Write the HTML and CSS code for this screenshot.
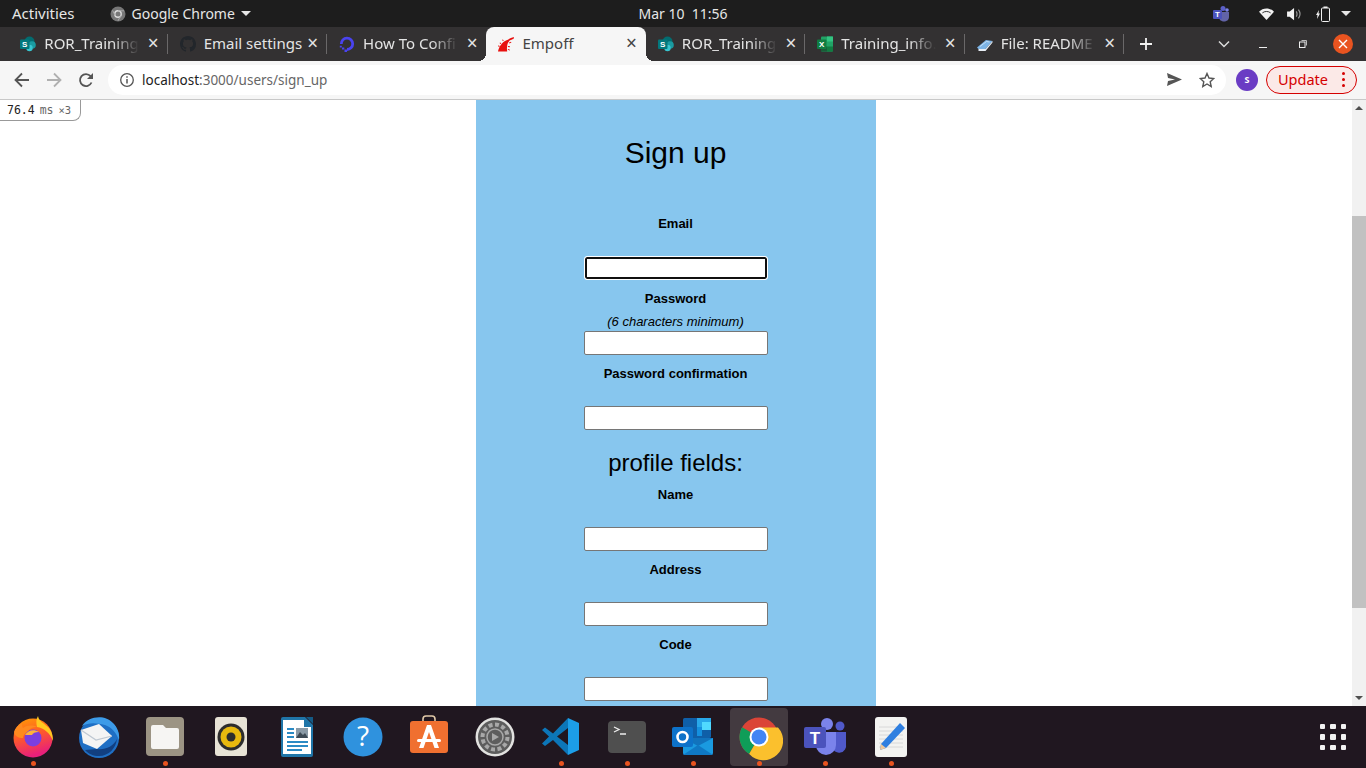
FILE: index.html
```html
<!DOCTYPE html>
<html lang="en">
<head>
    <meta charset="UTF-8">
    <meta name="viewport" content="width=device-width, initial-scale=1.0">
    <title>Empoff</title>
    <link rel="stylesheet" href="styles.css">
</head>
<body>

<!-- gnome top bar -->
<div class="topbar">
    <div class="topbar-left">
        <span class="activities">Activities</span>
        <span class="app-menu">
            <svg class="app-icon" width="16" height="16" viewBox="0 0 16 16"><circle cx="8" cy="8" r="7.5" fill="#777"/><circle cx="8" cy="8" r="3.2" fill="none" stroke="#ddd" stroke-width="1.4"/><path d="M8 4.8h6M5.2 9.6 2.6 4.4M10.8 9.6 8 14.8" stroke="#aaa" stroke-width="1"/></svg>
            Google Chrome
            <span class="caret"></span>
        </span>
    </div>
    <div class="clock">Mar 10&nbsp; 11:56</div>
    <div class="tray">
        <svg width="18" height="18" viewBox="0 0 18 18"><circle cx="11" cy="3.5" r="2.5" fill="#5b5fc7"/><circle cx="15" cy="5" r="1.8" fill="#7b83eb"/><path d="M7 7h10v5c0 6-10 6-10 0z" fill="#6264a7"/><rect x="1" y="5" width="9" height="9" rx="1" fill="#4b53bc"/><text x="5.5" y="12" class="tray-t">T</text></svg>
        <svg class="tray-wifi" width="15" height="12" viewBox="0 0 20 16"><path d="M0 5C5-1 15-1 20 5L10 16z" fill="#f2f2f2"/><path d="M4.500 6.500c3-2.500 8-2.500 11 0" fill="none" stroke="#1d1d1d" stroke-width="1.200"/></svg>
        <svg class="tray-vol" width="15" height="14" viewBox="0 0 17 16"><path d="M0 5h3l5-4v14l-5-4H0z" fill="#f2f2f2"/><path d="M10.500 5c1.200 2 1.200 4 0 6M13 3c2.200 3 2.200 7 0 10" fill="none" stroke="#999" stroke-width="1.300"/></svg>
        <svg class="tray-bat" width="14" height="16" viewBox="0 0 14 16"><path d="M3 4 0 9h1.500l-.5 4 3-5.500H2.500L3 4z" fill="#f2f2f2"/><rect x="5.500" y="2" width="8" height="13.500" rx="1" fill="none" stroke="#f2f2f2" stroke-width="1"/><rect x="7.500" y="0.500" width="4" height="1.500" fill="#f2f2f2"/></svg>
        <span class="caret"></span>
    </div>
</div>

<!-- chrome tab strip -->
<div class="tabstrip">
    <div class="tab">
        <svg class="favicon" viewBox="0 0 16 16"><circle cx="9.500" cy="5.500" r="5" fill="#036c70"/><circle cx="12" cy="9" r="3.800" fill="#1a9ba1"/><circle cx="9.500" cy="12" r="3.200" fill="#37c6d0"/><rect x="0" y="3.500" width="9.500" height="9.500" rx="1" fill="#03787c"/><text x="4.750" y="11" class="fav-t">S</text></svg>
        <span class="tab-title">ROR_Training</span>
        <span class="tab-close">×</span>
    </div>
    <div class="tab">
        <svg class="favicon" viewBox="0 0 16 16"><path fill="#22262b" d="M8 0C3.580 0 0 3.580 0 8c0 3.540 2.290 6.530 5.470 7.590.4.07.55-.17.55-.38 0-.19-.01-.82-.01-1.490-2.010.37-2.530-.49-2.690-.94-.09-.23-.48-.94-.82-1.130-.28-.15-.68-.52-.01-.53.63-.01 1.080.58 1.230.82.72 1.210 1.870.87 2.330.66.07-.52.28-.87.51-1.070-1.780-.2-3.640-.89-3.640-3.950 0-.87.31-1.590.82-2.150-.08-.2-.36-1.020.08-2.120 0 0 .67-.21 2.200.82.64-.18 1.320-.27 2-.27.68 0 1.360.09 2 .27 1.530-1.040 2.200-.82 2.200-.82.44 1.100.16 1.920.08 2.120.51.56.82 1.270.82 2.150 0 3.070-1.870 3.750-3.650 3.950.29.25.54.73.54 1.480 0 1.070-.01 1.930-.01 2.200 0 .21.15.46.55.38A8.013 8.013 0 0016 8c0-4.420-3.580-8-8-8z"/></svg>
        <span class="tab-title tab-title-full">Email settings</span>
        <span class="tab-close">×</span>
    </div>
    <div class="tab tab-nosep">
        <svg class="favicon" viewBox="0 0 16 16"><path d="M8 13.500A5.700 5.700 0 1 0 2.300 8" fill="none" stroke="#4a43f0" stroke-width="2.800"/><path d="M5.500 13.500h2.500V16H5.500zM3 11.500h2.300v2H3zM.8 9.800h2v1.800h-2z" fill="#4a43f0"/></svg>
        <span class="tab-title">How To Confi</span>
        <span class="tab-close">×</span>
    </div>
    <div class="tab tab-active">
        <svg class="favicon" viewBox="0 0 16 16"><path d="M0 15.500C1 10.500 4 6.500 8 4.500 10 3.500 13 1.500 16 1l-.5 2C12 3.500 10.500 5.500 9.500 8 8.800 10.500 8.800 13 9.200 15.500z" fill="#e8100e"/><path d="M11 6.500l2-.8.4.9-2 .8zM12 3.500l1.200-.8.5.8-1.200.8zM1 11 0 10l.8-.8 1 1zM2.500 8l-1-1 .8-.6 1 1zM5 5l-1-1 .8-.5 1 1zM10 10l2 .3-.2 1-2-.3zM10 13l2 .8-.3.8-2-.8z" fill="#e8100e"/></svg>
        <span class="tab-title tab-title-full">Empoff</span>
        <span class="tab-close">×</span>
    </div>
    <div class="tab">
        <svg class="favicon" viewBox="0 0 16 16"><circle cx="9.500" cy="5.500" r="5" fill="#036c70"/><circle cx="12" cy="9" r="3.800" fill="#1a9ba1"/><circle cx="9.500" cy="12" r="3.200" fill="#37c6d0"/><rect x="0" y="3.500" width="9.500" height="9.500" rx="1" fill="#03787c"/><text x="4.750" y="11" class="fav-t">S</text></svg>
        <span class="tab-title">ROR_Training</span>
        <span class="tab-close">×</span>
    </div>
    <div class="tab">
        <svg class="favicon" viewBox="0 0 16 16"><rect x="4" y="0.500" width="12" height="15" rx="1" fill="#21a366"/><rect x="10" y="0.500" width="6" height="5" fill="#33c481"/><rect x="10" y="10.500" width="6" height="5" fill="#107c41"/><rect x="4" y="10.500" width="6" height="5" fill="#185c37"/><rect x="0" y="3.500" width="9.500" height="9.500" rx="1" fill="#107c41"/><text x="4.750" y="11" class="fav-t">X</text></svg>
        <span class="tab-title">Training_info.</span>
        <span class="tab-close">×</span>
    </div>
    <div class="tab">
        <svg class="favicon" viewBox="0 0 16 16"><path d="M0 11.500 9 4l6.500 1-7 8L1.500 13z" fill="#7db4e6"/><path d="M1.500 13l7 0 7-8v1.500L8.500 15h-7z" fill="#e8eef5"/><path d="M3 10.500 9.500 5.500l3 .5" fill="none" stroke="#c8e0f5" stroke-width="1"/></svg>
        <span class="tab-title">File: README</span>
        <span class="tab-close">×</span>
    </div>
    <span class="new-tab">
        <svg width="14" height="14" viewBox="0 0 14 14"><path d="M7 1v12M1 7h12" stroke="#f2f2f2" stroke-width="1.800"/></svg>
    </span>
    <div class="win-buttons">
        <svg class="win-chevron" width="12" height="8" viewBox="0 0 12 8"><path d="M1 1.500 6 6.500l5-5" fill="none" stroke="#dcdcdc" stroke-width="1.500"/></svg>
        <svg class="win-min" width="8" height="8" viewBox="0 0 8 8"><path d="M0 7.500h8" stroke="#eee" stroke-width="1"/></svg>
        <svg class="win-restore" width="8" height="8" viewBox="0 0 8 8"><rect x="0.500" y="2" width="5.500" height="5.500" fill="none" stroke="#eee"/><path d="M2.500 .5h5v5" fill="none" stroke="#bbb"/></svg>
        <span class="win-close">
            <svg width="10" height="10" viewBox="0 0 10 10"><path d="M1 1l8 8M9 1l-8 8" stroke="#fff" stroke-width="1.400"/></svg>
        </span>
    </div>
</div>

<!-- chrome toolbar -->
<div class="toolbar">
    <svg class="nav-btn" width="16" height="16" viewBox="0 0 16 16"><path d="M15 8H2M8 1.500 1.500 8 8 14.500" fill="none" stroke="#555" stroke-width="1.800"/></svg>
    <svg class="nav-btn nav-fwd" width="16" height="16" viewBox="0 0 16 16"><path d="M1 8h13M8 1.500 14.500 8 8 14.500" fill="none" stroke="#b0b0b0" stroke-width="1.800"/></svg>
    <svg class="nav-btn nav-reload" width="16" height="16" viewBox="0 0 16 16"><path d="M13.500 10.500A6 6 0 1 1 12.600 4.200" fill="none" stroke="#555" stroke-width="1.800"/><path d="M15 1v6H9z" fill="#555"/></svg>
    <div class="omnibox">
        <svg width="16" height="16" viewBox="0 0 16 16"><circle cx="8" cy="8" r="6.300" fill="none" stroke="#555" stroke-width="1.300"/><path d="M8 7v4.500M8 4.300v1.500" stroke="#555" stroke-width="1.500"/></svg>
        <span class="url"><b>localhost</b>:3000/users/sign_up</span>
        <svg class="omni-send" width="15" height="13" viewBox="0 0 15 13"><path d="M0 0l15 6.500L0 13l1-5 7-1.500L1 5z" fill="#555"/></svg>
        <svg class="omni-star" width="16" height="16" viewBox="0 0 16 16"><path d="M8 1.500l2 4.500 4.800.5-3.600 3.200 1 4.800L8 12l-4.200 2.500 1-4.800L1.200 6.500 6 6z" fill="none" stroke="#555" stroke-width="1.400"/></svg>
    </div>
    <span class="avatar">S</span>
    <span class="update-pill"><span class="update-label">Update</span> <i class="dots"><i></i><i></i><i></i></i></span>
</div>

<!-- page content -->
<div class="page">
    <div class="viewport">
        <div class="mini-profiler"><b>76.4</b> <span>ms</span> <small>×3</small></div>
        <div class="signup-panel">
            <h1>Sign up</h1>
            <form>
                <div class="field">
                    <label>Email</label>
                    <div class="hint"></div>
                    <input type="text" class="is-focused">
                </div>
                <div class="field">
                    <label>Password</label>
                    <div class="hint"><em>(6 characters minimum)</em></div>
                    <input type="password">
                </div>
                <div class="field">
                    <label>Password confirmation</label>
                    <div class="hint"></div>
                    <input type="password">
                </div>
                <h2>profile fields:</h2>
                <div class="field">
                    <label>Name</label>
                    <div class="hint"></div>
                    <input type="text">
                </div>
                <div class="field">
                    <label>Address</label>
                    <div class="hint"></div>
                    <input type="text">
                </div>
                <div class="field">
                    <label>Code</label>
                    <div class="hint"></div>
                    <input type="text">
                </div>
            </form>
        </div>
    </div>
    <div class="scrollbar">
        <span class="scroll-btn"><i class="arrow-up"></i></span>
        <div class="scroll-track"><div class="scroll-thumb"></div></div>
        <span class="scroll-btn"><i class="arrow-down"></i></span>
    </div>
</div>

<!-- ubuntu dock -->
<div class="dock">
    <div class="dock-item running">
        <svg viewBox="0 0 48 48"><defs><linearGradient id="ff" x1="0" y1="0" x2="0.300" y2="1"><stop offset="0" stop-color="#ffa000"/><stop offset=".5" stop-color="#ff5a2a"/><stop offset="1" stop-color="#e8207a"/></linearGradient></defs><circle cx="24" cy="25" r="19.500" fill="url(#ff)"/><path d="M29 3c1 6 6 7 10 11 4 4 5 9 5 14-3-8-9-13-16-14-1-4-1-8 1-11z" fill="#ffc81f"/><path d="M5 19c1-4 4-7 8-9 0 2 0 4 1 5 4-3 10-3 14-1-5 0-8 2-9 5-3 1-5 3-5 6-5 0-8-2-9-6z" fill="#ff8a1f"/><circle cx="24" cy="25" r="8.500" fill="#7a3fe0"/><path d="M16 22c3-5 9-6 14-3-4 0-6 1-7 3z" fill="#ffb33a"/></svg>
    </div>
    <div class="dock-item">
        <svg viewBox="0 0 48 48"><circle cx="24" cy="25" r="20" fill="#1f6fc4"/><path d="M7 13C13 3 30 1 38 10c4 4 7 10 6 17-3-8-8-13-14-15-8-2-16-3-23 1z" fill="#3d9be8"/><path d="M6 17l18-6 13 12-15 13-14-6z" fill="#f4f4f4"/><path d="M6 17l15 10 16-4" fill="none" stroke="#bfc8d2" stroke-width="1.200"/><path d="M22 36c8 1 16-2 20-10-1 9-8 17-18 17-6 0-10-2-14-6z" fill="#123f80"/></svg>
    </div>
    <div class="dock-item running">
        <svg viewBox="0 0 48 48"><rect x="5" y="4" width="38" height="39" rx="4" fill="#9c9484"/><path d="M10 14a2 2 0 0 1 2-2h10l3 3h11a2 2 0 0 1 2 2v17a2 2 0 0 1-2 2H12a2 2 0 0 1-2-2z" fill="#f6f5f3"/></svg>
    </div>
    <div class="dock-item">
        <svg viewBox="0 0 48 48"><rect x="8" y="4" width="32" height="39" rx="3" fill="#e8e3d6"/><circle cx="24" cy="24" r="13.500" fill="#2d2d2d"/><circle cx="24" cy="24" r="10.500" fill="#e8b90e"/><circle cx="24" cy="24" r="4.500" fill="#2d2d2d"/></svg>
    </div>
    <div class="dock-item">
        <svg viewBox="0 0 48 48"><path d="M8 6a2 2 0 0 1 2-2h22l8 8v30a2 2 0 0 1-2 2H10a2 2 0 0 1-2-2z" fill="#1f75a8"/><path d="M10 7h21v7h7v27H10z" fill="#fff"/><path d="M33 4h7v7z" fill="#145a85"/><path d="M14 15h7v2h-7zM14 19h7v2h-7zM14 23h7v2h-7zM14 28h21v2H14zM14 32h21v2H14zM14 36h15v2H14z" fill="#2b8ac4"/><rect x="23" y="15" width="12" height="10" fill="#8a9aa6"/><path d="M23 25l4-6 3 3 2-2 3 5z" fill="#3d4a55"/></svg>
    </div>
    <div class="dock-item">
        <svg viewBox="0 0 48 48"><circle cx="24" cy="24" r="19.500" fill="#2f92de"/><text x="24" y="33" class="dock-q">?</text></svg>
    </div>
    <div class="dock-item">
        <svg viewBox="0 0 48 48"><path d="M18 9V6a3 3 0 0 1 3-3h6a3 3 0 0 1 3 3v3" fill="none" stroke="#e0c9a8" stroke-width="1.600"/><rect x="5" y="8" width="38" height="32" rx="3" fill="#f07030"/><path d="M22 12h4l8 23h-4.500L24 19l-5.500 16H14z" fill="#fff"/><rect x="12" y="26" width="24" height="3" rx="1.500" fill="#fff"/></svg>
    </div>
    <div class="dock-item">
        <svg viewBox="0 0 48 48"><circle cx="24" cy="24" r="19.500" fill="#e2e2e0"/><circle cx="24" cy="24" r="17" fill="#5d5d5d"/><circle cx="24" cy="24" r="12.500" fill="none" stroke="#a8a8a8" stroke-width="4" stroke-dasharray="4 2.500"/><circle cx="24" cy="24" r="8" fill="#5d5d5d" stroke="#a8a8a8" stroke-width="1.500"/><path d="M21 20l7 4-7 4z" fill="#a8a8a8"/></svg>
    </div>
    <div class="dock-item running">
        <svg viewBox="0 0 48 48"><path d="M5 17l3-2.500 8 6L31 5v10L20 23.500l11 8.500v10L16 27l-8 6-3-2.500 7-7z" fill="#0c76b8"/><path d="M31 5l11 5v27l-11 5z" fill="#1c9ee8"/></svg>
    </div>
    <div class="dock-item running">
        <svg viewBox="0 0 48 48"><rect x="5" y="8" width="38" height="32" rx="4" fill="#4f4f4f"/><path d="M11 14l5 2.500-5 2.500" fill="none" stroke="#eee" stroke-width="1.300"/><path d="M17 21h6" stroke="#eee" stroke-width="1.500"/></svg>
    </div>
    <div class="dock-item running">
        <svg viewBox="0 0 48 48"><rect x="14" y="5" width="28" height="20" rx="1.500" fill="#0f5fa8"/><rect x="28" y="5" width="14" height="9" fill="#28a8ea"/><rect x="33" y="9" width="9" height="8" fill="#50d9ff"/><rect x="28" y="14" width="5" height="9" fill="#1490df"/><path d="M14 25h30v15a2 2 0 0 1-2 2H16a2 2 0 0 1-2-2z" fill="#1a9ae0"/><path d="M14 25h30L29 33z" fill="#1173bd"/><path d="M14 42l15-10 15 10z" fill="#0f78c4"/><rect x="3" y="14" width="21" height="20" rx="2" fill="#0d72c9"/><circle cx="13.500" cy="24" r="5" fill="none" stroke="#fff" stroke-width="2.600"/></svg>
    </div>
    <div class="dock-item running dock-hover">
        <svg viewBox="0 0 48 48"><circle cx="24" cy="24" r="19.500" fill="#db4437"/><path d="M24 24 7.100 14.300A19.500 19.500 0 0 0 14.200 40.900z" fill="#0f9d58"/><path d="M24 14.500h19A19.500 19.500 0 0 1 14.200 40.900L24 24z" fill="#fbc02d"/><circle cx="24" cy="24" r="9.500" fill="#fff"/><circle cx="24" cy="24" r="7.500" fill="#4285f4"/></svg>
    </div>
    <div class="dock-item running">
        <svg viewBox="0 0 48 48"><circle cx="26" cy="11" r="6" fill="#7b83eb"/><circle cx="39" cy="13" r="4.500" fill="#5059c9"/><path d="M31 19h14v12a7 7 0 0 1-14 3z" fill="#5059c9"/><path d="M15 19h20v13a10 10 0 0 1-20 0z" fill="#7b83eb"/><rect x="3" y="14" width="22" height="21" rx="2" fill="#4b53bc"/><text x="14" y="31" class="dock-t">T</text></svg>
    </div>
    <div class="dock-item running">
        <svg viewBox="0 0 48 48"><rect x="8" y="4" width="32" height="40" rx="3" fill="#f3f3f1"/><path d="M12 14h24M12 18h24M12 22h24M12 26h24M12 30h24M12 34h24" stroke="#d8d8d8" stroke-width="1"/><path d="M33 10l5 5-19 20-6 2 1-6z" fill="#2f7fe0"/><path d="M14 31l5 4-6 2z" fill="#f0c89a"/></svg>
    </div>
    <div class="apps-grid">
        <i></i><i></i><i></i><i></i><i></i><i></i><i></i><i></i><i></i>
    </div>
</div>

</body>
</html>
```

FILE: styles.css
```css
* {
    box-sizing: border-box;
}

html, body {
    margin: 0;
    height: 100%;
    overflow: hidden;
}

body {
    display: flex;
    flex-direction: column;
    height: 768px;
    font-family: "Noto Sans", "Open Sans", sans-serif;
    background-color: white;
}

/* top bar */
.topbar {
    height: 27px;
    flex: none;
    display: grid;
    grid-template-columns: 1fr auto 1fr;
    align-items: center;
    background-color: #1d1d1d;
    color: #e6e6e6;
    font-size: 14px;
}

.topbar-left {
    display: flex;
    align-items: center;
    padding-left: 12px;
}

.activities {
    margin-top: -2px;
    font-size: 15px;
}

.app-menu {
    display: flex;
    align-items: center;
    margin-left: 35px;
}

.app-icon {
    margin-right: 6px;
}

.caret {
    display: inline-block;
    width: 0;
    height: 0;
    margin-left: 6px;
    border-left: 5px solid transparent;
    border-right: 5px solid transparent;
    border-top: 5px solid #e6e6e6;
}

.clock {
    font-size: 14px;
}

.tray {
    display: flex;
    align-items: center;
    justify-content: flex-end;
    padding-right: 15px;
}

.tray-wifi {
    margin-left: 29px;
}

.tray-vol {
    margin-left: 13px;
}

.tray-bat {
    margin-left: 14px;
}

.tray .caret {
    margin-left: 11px;
}

.tray-t {
    font: bold 8px "Liberation Sans", sans-serif;
    fill: white;
    text-anchor: middle;
}

/* tabs */
.tabstrip {
    height: 34px;
    flex: none;
    display: flex;
    padding-left: 8.3px;
    background-color: #333132;
}

.tab {
    position: relative;
    width: 159.4px;
    flex: none;
    display: flex;
    align-items: center;
    padding-left: 12px;
    color: #e4e4e4;
    font-size: 15px;
}

.tab::after {
    content: "";
    position: absolute;
    right: 0;
    top: 7px;
    height: 20px;
    width: 1px;
    background-color: #6a6869;
}

.tab-nosep::after {
    display: none;
}

.tab-active {
    background-color: #f6f6f6;
    color: #444;
    border-radius: 8px 8px 0 0;
}

/* the two flared corners at the foot of the active tab */
.tab-active::before,
.tab-active::after {
    content: "";
    position: absolute;
    top: auto;
    bottom: 0;
    width: 8px;
    height: 8px;
}

.tab-active::before {
    left: -8px;
    background: radial-gradient(circle at 0 0, transparent 8px, #f6f6f6 8px);
}

.tab-active::after {
    right: -8px;
    background: radial-gradient(circle at 100% 0, transparent 8px, #f6f6f6 8px);
}

.favicon {
    width: 16px;
    height: 16px;
    flex: none;
    margin-right: 8px;
}

.tab-title {
    width: 95px;
    margin-top: -2px;
    overflow: hidden;
    white-space: nowrap;
    -webkit-mask-image: linear-gradient(to right, black 72%, transparent 100%);
    mask-image: linear-gradient(to right, black 72%, transparent 100%);
}

.tab-title-full {
    width: 98px;
    -webkit-mask-image: none;
    mask-image: none;
}

.tab-close {
    position: absolute;
    left: 138px;
    top: 7px;
    width: 14px;
    text-align: center;
    font-size: 19px;
    line-height: 19px;
}

.new-tab {
    display: flex;
    margin-left: 15px;
    align-items: center;
}

.win-buttons {
    display: flex;
    align-items: center;
    margin-left: 65px;
}

.win-min {
    margin-left: 29px;
}

.win-restore {
    margin-left: 32px;
}

.win-close {
    display: flex;
    align-items: center;
    justify-content: center;
    width: 20px;
    height: 20px;
    margin-left: 26px;
    border-radius: 50%;
    background-color: #e95420;
}

/* toolbar */
.toolbar {
    height: 39px;
    flex: none;
    display: flex;
    align-items: center;
    padding: 0 9px 1px 14px;
    background-color: #f6f6f6;
    border-bottom: 1px solid #c8c8c8;
}

.nav-fwd {
    margin-left: 16px;
}

.nav-reload {
    margin-left: 16px;
}

.omnibox {
    width: 1118px;
    height: 30px;
    display: flex;
    align-items: center;
    margin-left: 14px;
    padding: 0 11px 0 11px;
    border-radius: 15px;
    background-color: white;
}

.url {
    margin-left: 7px;
    font-size: 13.5px;
    color: #666;
}

.url b {
    font-weight: normal;
    color: #222;
}

.omni-send {
    margin-left: auto;
}

.omni-star {
    margin-left: 17px;
}

.avatar {
    width: 22px;
    height: 22px;
    flex: none;
    display: flex;
    align-items: center;
    justify-content: center;
    margin-left: 10px;
    border-radius: 50%;
    background-color: #6a3cc4;
    color: white;
    font-size: 9px;
    font-weight: bold;
}

.update-pill {
    width: 91px;
    height: 28px;
    flex: none;
    display: flex;
    align-items: center;
    margin-left: 8px;
    padding-left: 11px;
    border: 1px solid #d50000;
    border-radius: 14px;
    background-color: #fbe9e7;
    color: #d50000;
    font-size: 14.5px;
}

.update-label {
    margin-top: -2px;
}

.dots {
    display: flex;
    flex-direction: column;
    gap: 3px;
    margin-left: auto;
    margin-right: 11px;
}

.dots i {
    width: 3px;
    height: 3px;
    border-radius: 50%;
    background-color: #d50000;
}

/* page */
.page {
    flex: 1;
    min-height: 0;
    display: flex;
}

.viewport {
    position: relative;
    flex: 1;
    overflow: hidden;
    background-color: white;
}

.mini-profiler {
    position: absolute;
    left: 0;
    top: 0;
    width: 81px;
    height: 21px;
    padding: 3px 0 0 7px;
    border: 1px solid #999;
    border-width: 0 1px 1px 0;
    border-radius: 0 0 8px 0;
    background-color: white;
    color: #666;
    font-family: "DejaVu Sans Mono", monospace;
    font-size: 11.5px;
    word-spacing: -2px;
    white-space: nowrap;
}

.mini-profiler b {
    font-weight: normal;
    color: #222;
}

.mini-profiler small {
    font-size: 10.5px;
}

.signup-panel {
    width: 400px;
    margin: 0 auto;
    padding-top: 36px;
    background-color: #87c6ee;
    font-family: "Liberation Sans", Arial, sans-serif;
    text-align: center;
    color: black;
}

.signup-panel h1 {
    margin: 0 0 46px;
    padding-right: 1px;
    font-size: 30px;
    font-weight: normal;
    line-height: 34px;
}

.signup-panel h2 {
    margin: 0 0 6px;
    padding: 3px 1px 0 0;
    font-size: 24px;
    font-weight: normal;
    line-height: 37px;
}

.field {
    height: 75px;
}

.field label {
    display: block;
    padding-right: 1px;
    font-size: 13px;
    font-weight: bold;
    line-height: 15px;
}

.hint {
    height: 25px;
    padding: 8px 1px 0 0;
    font-size: 13px;
    line-height: 15px;
}

.field input {
    display: block;
    width: 184px;
    height: 24px;
    margin: 0 auto;
    padding: 1px 2px;
    border: 1px solid #767676;
    border-radius: 2px;
    background-color: white;
}

.field input.is-focused {
    border-color: white;
    border-radius: 3px;
    box-shadow: inset 0 0 0 2px #101010;
}

/* scrollbar */
.scrollbar {
    width: 14px;
    flex: none;
    display: flex;
    flex-direction: column;
    background-color: #f1f1f1;
}

.scroll-btn {
    height: 16px;
    flex: none;
    display: flex;
    align-items: center;
    justify-content: center;
}

.arrow-up, .arrow-down {
    width: 0;
    height: 0;
    border-left: 4px solid transparent;
    border-right: 4px solid transparent;
}

.arrow-up {
    border-bottom: 4px solid #505050;
}

.arrow-down {
    border-top: 4px solid #505050;
}

.scroll-track {
    flex: 1;
    padding-top: 100px;
}

.scroll-thumb {
    height: 392px;
    background-color: #c1c1c1;
}

/* dock */
.dock {
    height: 62px;
    flex: none;
    display: flex;
    align-items: center;
    background-color: #201720;
}

.dock-item {
    position: relative;
    width: 66px;
    height: 62px;
    flex: none;
    display: flex;
    align-items: center;
    justify-content: center;
}

.dock-item svg {
    width: 48px;
    height: 48px;
}

.running::after {
    content: "";
    position: absolute;
    left: 31px;
    bottom: 2px;
    width: 5px;
    height: 5px;
    border-radius: 50%;
    background-color: #e95420;
}

.dock-hover::before {
    content: "";
    position: absolute;
    left: 4px;
    top: 2px;
    width: 58px;
    height: 58px;
    border-radius: 4px;
    background-color: #433a40;
}

.dock-hover svg {
    position: relative;
}

.dock-q {
    font: 28px "Open Sans", sans-serif;
    fill: white;
    text-anchor: middle;
}

.dock-t {
    font: bold 17px "Liberation Sans", sans-serif;
    fill: white;
    text-anchor: middle;
}

.fav-t {
    font: bold 8px "Liberation Sans", sans-serif;
    fill: white;
    text-anchor: middle;
}

.apps-grid {
    display: grid;
    grid-template-columns: repeat(3, 5.5px);
    gap: 5px;
    margin-left: auto;
    margin-right: 20px;
}

.apps-grid i {
    width: 5.5px;
    height: 5.5px;
    border-radius: 1px;
    background-color: #f2f2f2;
}
```
